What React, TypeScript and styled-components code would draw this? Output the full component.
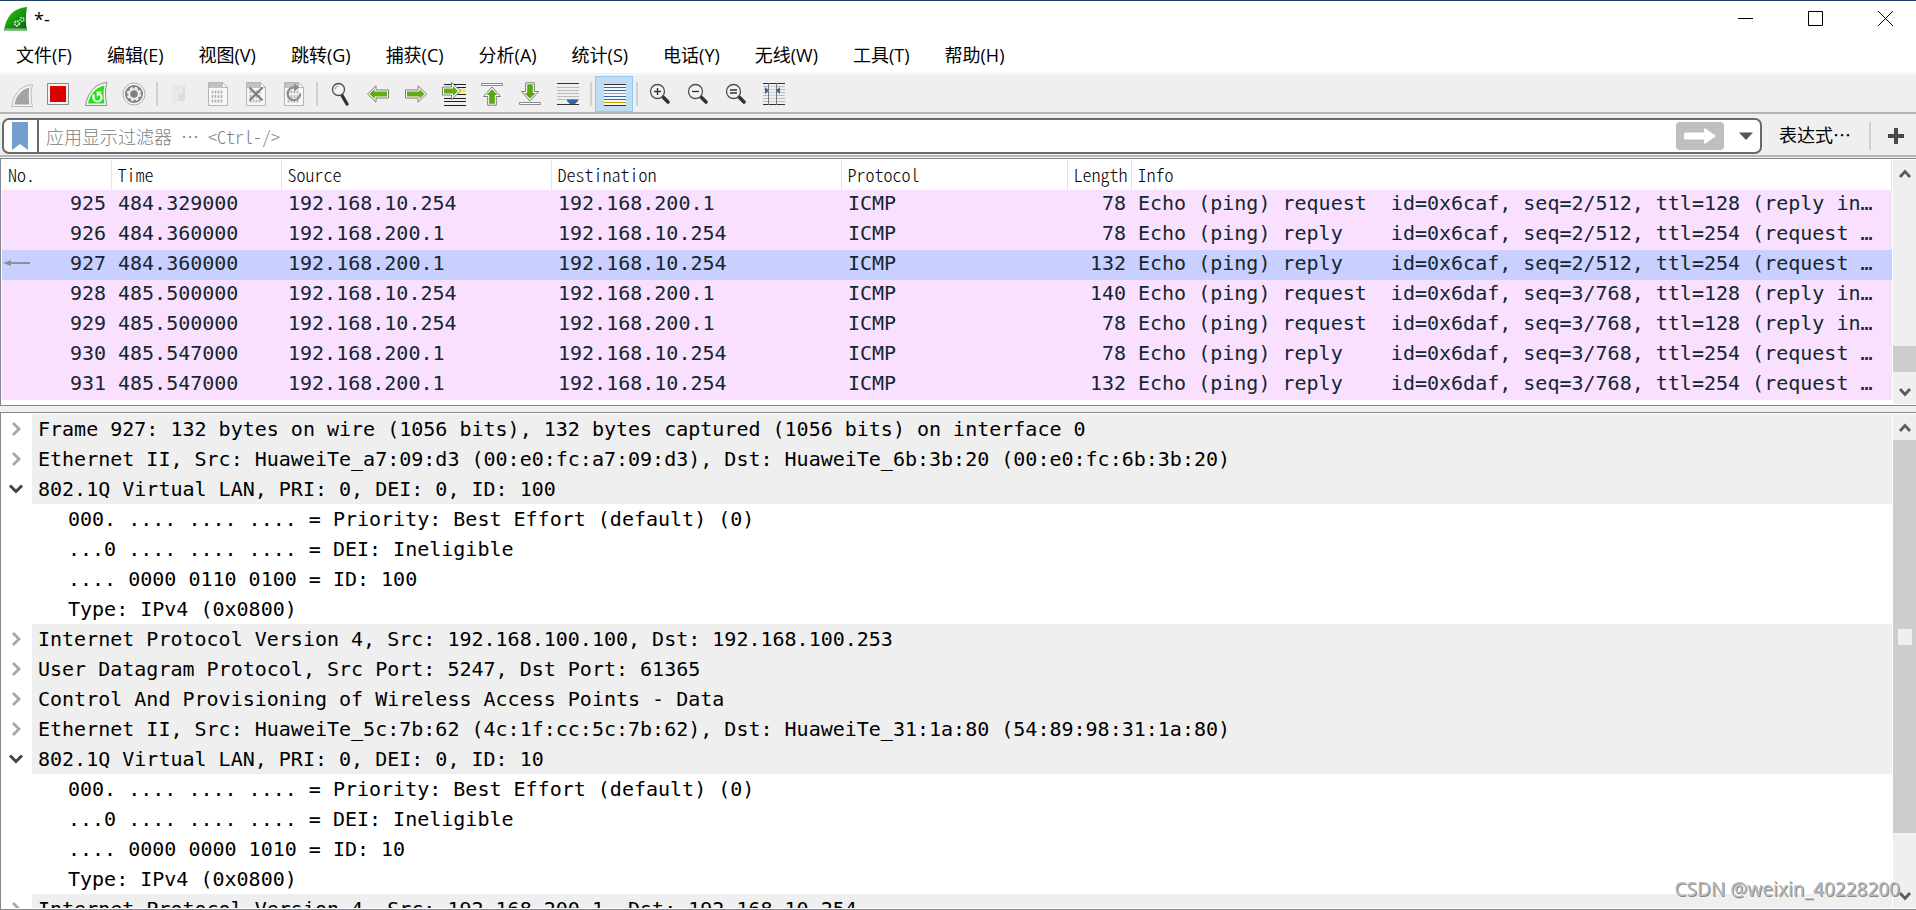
import React from 'react';
import styled, { createGlobalStyle, css } from 'styled-components';

const UI = '"Noto Sans CJK SC", "Open Sans", sans-serif';
const MENU = '"Open Sans", "Noto Sans CJK SC", sans-serif';
const MONO = '"DejaVu Sans Mono", "Liberation Mono", monospace';
const EDGE = '#828790';

const GlobalStyle = createGlobalStyle`
  * { box-sizing: border-box; }
  html, body { margin: 0; padding: 0; background: #fff; }
  button { border: 0; padding: 0; margin: 0; background: none; font: inherit; color: inherit; }
  svg { display: block; flex: none; }
`;

const Window = styled.main`
  position: relative;
  display: flex;
  flex-direction: column;
  height: 100vh;
  overflow: hidden;
  background: #f0f0f0;
  border-top: 1px solid #1b3f66;
  font: 18px ${UI};
  color: #000;
`;

const TitleBar = styled.header`
  display: flex;
  align-items: center;
  height: 35px;
  padding-left: 4px;
  background: #fff;
`;

const Title = styled.h1`
  flex: 1;
  margin: 0;
  padding-left: 7px;
  font: 400 18px/26px "Open Sans", sans-serif;
`;

const WindowControls = styled.div`
  display: flex;
  gap: 8px;
`;

const WindowButton = styled.button`
  display: flex;
  align-items: center;
  justify-content: center;
  width: 62px;
  height: 32px;
`;

const MenuBar = styled.nav`
  display: flex;
  height: 39px;
  background: #fff;
  border-bottom: 2px solid #f1f1f1;
  font-family: ${MENU};
`;

const MenuItem = styled.button`
  padding: 0 19px 0 16px;
  line-height: 36px;
  white-space: nowrap;
`;

const ToolBar = styled.div`
  display: flex;
  align-items: center;
  height: 39px;
  padding: 1px 0 0 1px;
  background: #efefef;
  border-bottom: 2px solid #b4b4b4;
  outline: 1px solid #fafafa;
`;

const ToolButton = styled.button<{ $active?: boolean }>`
  display: flex;
  align-items: center;
  justify-content: center;
  width: 38px;
  height: 36px;
  ${p => p.$active && css`
    background: #c0dcf3;
    border: 1px solid #90c8f6;
  `}
`;

const ToolSeparator = styled.span`
  width: 2px;
  height: 24px;
  margin: 0 3px;
  background: #cfcfcf;
`;

const FilterBar = styled.form`
  display: flex;
  align-items: center;
  height: 43px;
  padding: 2px 12px 0 2px;
  background: #efefef;
  border-bottom: 2px solid #b8b8b8;
`;

const FilterBox = styled.div`
  display: flex;
  align-items: center;
  flex: 1;
  height: 36px;
  background: #fff;
  border: 2px solid #696969;
  border-radius: 7px;
`;

const BookmarkButton = styled.button`
  display: flex;
  align-items: center;
  justify-content: center;
  width: 35px;
  height: 32px;
  padding-right: 1px;
  border-right: 2px solid #696969;
`;

const FilterInput = styled.input`
  flex: 1;
  min-width: 0;
  height: 28px;
  padding: 0 0 0 7px;
  border: 0;
  outline: 0;
  background: none;
  font: 18px/28px ${UI};
  font-feature-settings: "hwid";
  &::placeholder { color: #808080; opacity: 1; font-weight: 300; }
`;

const ApplyButton = styled.button`
  display: flex;
  align-items: center;
  justify-content: center;
  width: 48px;
  height: 28px;
  border-radius: 4px;
  background: #bfbfbf;
`;

const DropButton = styled.button`
  display: flex;
  align-items: center;
  justify-content: center;
  width: 36px;
  height: 32px;
  padding-left: 8px;
`;

const ExpressionButton = styled.button`
  padding: 0 18px 4px 17px;
  line-height: 28px;
`;

const BarSeparator = styled.span`
  width: 2px;
  height: 28px;
  background: #cfcfcf;
`;

const AddButton = styled.button`
  padding-left: 17px;
`;

const Pane = styled.section<{ $grow?: boolean }>`
  display: flex;
  flex: ${p => (p.$grow ? '1 1 0' : '0 0 auto')};
  min-height: 0;
  margin-top: ${p => (p.$grow ? 6 : 1)}px;
  padding: 1px 0 1px 1px;
  background: #fff;
  border: solid ${EDGE};
  border-width: 1px 0 1px 1px;
`;

const PaneBody = styled.div`
  flex: 1;
  min-width: 0;
  overflow: hidden;
`;

const PacketTable = styled.table`
  width: 100%;
  margin-bottom: 4px;
  table-layout: fixed;
  border-collapse: collapse;
`;

const Heading = styled.th`
  height: 30px;
  padding: 0 0 0 6px;
  overflow: hidden;
  border-right: 1px solid #e5e5e5;
  font: 18px/28px ${UI};
  font-feature-settings: "hwid";
  font-weight: 300;
  text-align: left;
  vertical-align: top;
  white-space: nowrap;
`;

const PacketRow = styled.tr<{ $selected?: boolean }>`
  height: 30px;
  background: ${p => (p.$selected ? '#c9cfff' : '#fae0ff')};
`;

const Cell = styled.td<{ $right?: boolean }>`
  height: 30px;
  padding: 0 5px 0 7px;
  overflow: hidden;
  color: #12272e;
  font: 20px/26px ${MONO};
  text-align: ${p => (p.$right ? 'right' : 'left')};
  vertical-align: top;
  white-space: pre;
`;

const NumberCell = styled.div`
  display: flex;
  align-items: center;
  justify-content: space-between;
  margin-left: -6px;
`;

const ScrollBar = styled.div`
  display: flex;
  flex-direction: column;
  flex: none;
  width: 24px;
  background: #efefef;
  border-left: 1px solid #fff;
`;

const ScrollButton = styled.button`
  display: flex;
  flex: none;
  align-items: center;
  justify-content: center;
  height: 26px;
  padding-top: 2px;
`;

const ScrollTrack = styled.div<{ $end?: boolean }>`
  display: flex;
  flex: 1;
  flex-direction: column;
  justify-content: ${p => (p.$end ? 'flex-end' : 'flex-start')};
  padding-bottom: ${p => (p.$end ? 6 : 0)}px;
`;

const ScrollThumb = styled.div<{ $size: string }>`
  display: flex;
  align-items: center;
  justify-content: center;
  height: ${p => p.$size};
  background: #cdcdcd;
`;

const Grip = styled.span`
  width: 14px;
  height: 16px;
  background: #efefef;
`;

const Tree = styled.ul`
  margin: 0;
  padding: 0;
  list-style: none;
`;

const TreeLine = styled.div`
  display: flex;
  height: 30px;
`;

const Toggle = styled.button`
  display: flex;
  flex: none;
  align-items: center;
  justify-content: center;
  width: 30px;
  padding-right: 3px;
`;

const TreeText = styled.span<{ $child?: boolean }>`
  flex: 1;
  padding-left: ${p => (p.$child ? 66 : 6)}px;
  background: ${p => (p.$child ? '#fff' : '#efefef')};
  font: 20px/30px ${MONO};
  white-space: pre;
`;

const Watermark = styled.span`
  position: absolute;
  right: 16px;
  bottom: 8px;
  color: #b8b8b8;
  font: 19px/26px "Noto Sans", sans-serif;
  text-shadow: 1px 1px 0 #8a8a8a, -1px -1px 0 #fff;
`;

/* ---------- drawings ---------- */

const Svg = ({ children }: { children: React.ReactNode }) => (
  <svg width="26" height="26" viewBox="0 0 26 26" fill="none" aria-hidden="true">{children}</svg>
);

const AppLogo = () => (
  <svg width="23" height="24" viewBox="0 0 23 24" aria-hidden="true">
    <defs>
      <linearGradient id="fin" x1="0" y1="0" x2="1" y2="1">
        <stop offset="0" stopColor="#3fc41a" />
        <stop offset="0.5" stopColor="#159a10" />
        <stop offset="1" stopColor="#0b5c0b" />
      </linearGradient>
    </defs>
    <path d="M0 23.500C2 10 9 1 23 0c-1.500 8-1.500 16 0 23.500z" fill="url(#fin)" />
    <path d="M1 21.500h21.500v2H.5z" fill="#7fb98a" />
    <circle cx="13" cy="16.500" r="2.300" fill="none" stroke="#cfe8cf" strokeWidth="1.800" strokeDasharray="1.600 .8" />
    <circle cx="18" cy="12.500" r="1.900" fill="none" stroke="#cfe8cf" strokeWidth="1.500" strokeDasharray="1.400 .8" />
  </svg>
);

const FinGrey = () => (
  <Svg>
    <path d="M4.500 25.500C6.500 14 13 4.500 25.500 3.500c-2 7-2 15 0 22z" fill="#f6f6f6" stroke="#b9b9b9" />
    <path d="M7.500 23.500C9.500 14.500 14 8.500 22.500 6.500c-1 5.500-1 11.500 0 17z" fill="#a3a3a3" />
  </Svg>
);

const Stop = () => (
  <Svg>
    <path d="M2.500 2.500h21v21h-21z" fill="#f4f4f4" stroke="#8b8b8b" />
    <path d="M5 5h16v16H5z" fill="#dc0000" />
  </Svg>
);

const Restart = () => (
  <Svg>
    <path d="M2.500 24.500C4.500 13 11 2.500 24 1.500c-2 7-2 16 0 23z" fill="#f6f6f6" stroke="#8f8f8f" />
    <path d="M5 22.500C7 13.500 12 6.500 21.500 4.500c-1.300 6-1.300 12.500 0 18z" fill="#1fe60e" />
    <path d="M10.500 13.500v3a4 4 0 0 0 8 0c0-1.500-.8-2.800-2-3.400" stroke="#fff" strokeWidth="2.200" />
    <path d="M13.500 10.500h5.500l-5 5.500z" fill="#fff" />
  </Svg>
);

const Gear = () => (
  <Svg>
    <circle cx="13" cy="13" r="11" fill="#f4f4f4" stroke="#b0b0b0" />
    <circle cx="13" cy="13" r="9" fill="#808080" />
    <circle cx="13" cy="13" r="6.200" stroke="#f0f0f0" strokeWidth="2" strokeDasharray="2.900 1.970" />
    <circle cx="13" cy="13" r="4.800" stroke="#f0f0f0" strokeWidth="2" />
  </Svg>
);

const OpenFile = () => (
  <Svg>
    <path d="M4 3h5v20l-4-1z" fill="#e9e9e9" />
    <path d="M7 5h11v15H7z" fill="#dcdcdc" />
    <path d="M7 4.500l5-1.500v17l-4 2.500z" fill="#e8e8e8" />
    <path d="M12 4h4v9h-4z" fill="#e8e8e8" />
  </Svg>
);

const Sheet = ({ children }: { children?: React.ReactNode }) => (
  <Svg>
    <path d="M3.500 1.500h14l5 5v18h-19z" fill="#f8f8f8" stroke="#b5b5b5" />
    <path d="M4 2h13v5H4z" fill="#c2c2c2" />
    <path d="M17.500 1.500v5h5z" fill="#fff" stroke="#b5b5b5" />
    <path d="M7.500 9.500v3m3-3v3m3-3v3m3-3v3m-9 1.500v3m3-3v3m3-3v3m3-3v3m-9 1.500v3m3-3v3m3-3v3m3-3v3" stroke="#b4b4b4" strokeWidth="1.700" />
    {children}
  </Svg>
);

const CloseFile = () => (
  <Sheet><path d="M6.500 6.500l13 13m0-13l-13 13" stroke="#7d7d7d" strokeWidth="2.200" /></Sheet>
);

const ReloadFile = () => (
  <Sheet>
    <path d="M19.200 12.500a6.300 6.300 0 1 1-6.200-6" stroke="#8c8c8c" strokeWidth="2.300" />
    <path d="M13 2.500l5.500 4-5.500 4z" fill="#8c8c8c" />
  </Sheet>
);

const Find = () => (
  <Svg>
    <path d="M14.500 13.500l5.500 9.500" stroke="#2e3436" strokeWidth="3.400" strokeLinecap="round" />
    <circle cx="11.500" cy="8.500" r="6" fill="#f3f5f5" stroke="#4a4f50" strokeWidth="1.300" />
    <path d="M8 8.500a3.500 3.500 0 0 1 3.500-3.500" stroke="#9a9a9a" />
  </Svg>
);

const LEFT = 'M2.500 13L11 4.800V9h12.500v8H11v4.200z';

const Arrow = ({ transform }: { transform?: string }) => (
  <g transform={transform}>
    <path d={LEFT} fill="#fff" stroke="#7c7c7c" strokeLinejoin="round" />
    <path d="M4.500 13L9.600 8v2.500H22v5H9.600V18z" fill="#62ad12" />
  </g>
);

const GoLeft = () => <Svg><Arrow /></Svg>;
const GoRight = () => <Svg><Arrow transform="matrix(-1 0 0 1 26 0)" /></Svg>;

const GoTo = () => (
  <Svg>
    <path d="M3 3.500h22M3 6.500h22M3 13.500h22M3 17.500h22M3 20.500h22M3 24.500h22" stroke="#1e1e1e" />
    <path d="M18 8h7v3.500h-7z" fill="#fce94f" />
    <path d="M1.500 6h9V1.500l9 8.500-9 8.500V14h-9z" fill="#fff" stroke="#7c7c7c" strokeLinejoin="round" />
    <path d="M3 7.500h9V5l5 5-5 5v-2.500H3z" fill="#62ad12" />
  </Svg>
);

const VerticalArrow = () => (
  <>
    <path d="M2.500 2.500h21v2h-21z" fill="#fff" stroke="#8a8a8a" />
    <path d="M13 6l8.500 9.500h-4.200v8.700H8.700v-8.700H4.500z" fill="#fff" stroke="#7c7c7c" strokeLinejoin="round" />
    <path d="M13 8.300l5.500 5.700h-2.700v8.700h-5.600V14H7.500z" fill="#58a810" />
  </>
);

const GoTop = () => <Svg><VerticalArrow /></Svg>;
const GoBottom = () => <Svg><g transform="matrix(1 0 0 -1 0 26)"><VerticalArrow /></g></Svg>;

const AutoScroll = () => (
  <Svg>
    <path d="M2 6.500h22M2 9.500h22M2 12.500h22M2 15.500h22M2 18.500h22" stroke="#babdb6" />
    <path d="M2 2.500h22M2 23.500h22" stroke="#2e3436" />
    <path d="M12 18.500h11v1.500l-3 3h-5l-3-3z" fill="#3465a4" />
  </Svg>
);

const Colorize = () => (
  <Svg>
    <path d="M3 3h22v22H3z" fill="#f6f6f6" />
    {['#2e3436', '#ef2929', '#3465a4', '#73d216', '#3465a4', '#75507b', '#c4a000', '#2e3436'].map((color, i) => (
      <path key={i} d={`M3 ${3 + i * 3}.5h22`} stroke={color} />
    ))}
  </Svg>
);

const Magnifier = ({ sign }: { sign: string }) => (
  <Svg>
    <path d="M15.500 15.500L21 21" stroke="#2e3436" strokeWidth="3.600" strokeLinecap="round" />
    <circle cx="10.500" cy="10.500" r="7" fill="#f2f4f4" stroke="#4a4f50" strokeWidth="1.300" />
    <path d={sign} stroke="#2e3436" strokeWidth="1.400" />
  </Svg>
);

const ResizeColumns = () => (
  <Svg>
    <path d="M2 5.500h22M2 8.500h22M2 11.500h22M2 14.500h22M2 17.500h22M2 20.500h22" stroke="#babdb6" />
    <path d="M8 3h8v20H8z" fill="#efefef" fillOpacity=".4" />
    <path d="M2 2.500h22M2 23.500h22" stroke="#2e3436" />
    <path d="M7.500 2v22M15.500 2v22" stroke="#777" />
    <path d="M4 6l4 3.500L4 13zM19 6v7l-4-3.500z" fill="#3465a4" />
  </Svg>
);

const Chevron = ({ dir }: { dir: 'up' | 'down' }) => (
  <svg width="12" height="10" viewBox="0 0 12 10" fill="none" aria-hidden="true">
    <path d={dir === 'up' ? 'M1 8l5-5.500L11 8' : 'M1 2l5 5.500L11 2'} stroke="#5a5a5a" strokeWidth="2.800" />
  </svg>
);

const TreeChevron = ({ open }: { open: boolean }) => (
  <svg width="14" height="14" viewBox="0 0 14 14" fill="none" aria-hidden="true">
    {open
      ? <path d="M1 3.500L7 9.500l6-6" stroke="#404040" strokeWidth="2.800" />
      : <path d="M4 1L10 7l-6 6" stroke="#a6a6a6" strokeWidth="2.800" />}
  </svg>
);

/* ---------- data ---------- */

const menus = ['文件(F)', '编辑(E)', '视图(V)', '跳转(G)', '捕获(C)', '分析(A)', '统计(S)', '电话(Y)', '无线(W)', '工具(T)', '帮助(H)'];

type Tool = { name: string; icon: React.ReactNode; active?: boolean };

const toolGroups: Tool[][] = [
  [
    { name: '开始捕获', icon: <FinGrey /> },
    { name: '停止捕获', icon: <Stop /> },
    { name: '重新开始捕获', icon: <Restart /> },
    { name: '捕获选项', icon: <Gear /> },
  ],
  [
    { name: '打开', icon: <OpenFile /> },
    { name: '保存', icon: <Sheet /> },
    { name: '关闭', icon: <CloseFile /> },
    { name: '重新加载', icon: <ReloadFile /> },
  ],
  [
    { name: '查找分组', icon: <Find /> },
    { name: '上一个分组', icon: <GoLeft /> },
    { name: '下一个分组', icon: <GoRight /> },
    { name: '转到分组', icon: <GoTo /> },
    { name: '首个分组', icon: <GoTop /> },
    { name: '最新分组', icon: <GoBottom /> },
    { name: '自动滚动', icon: <AutoScroll /> },
  ],
  [{ name: '着色', icon: <Colorize />, active: true }],
  [
    { name: '放大', icon: <Magnifier sign="M7 10.500h7M10.500 7v7" /> },
    { name: '缩小', icon: <Magnifier sign="M7 10.500h7" /> },
    { name: '原始大小', icon: <Magnifier sign="M7 9h7M7 12h7" /> },
    { name: '调整列宽', icon: <ResizeColumns /> },
  ],
];

const columns: { name: string; width?: number }[] = [
  { name: 'No.', width: 109 },
  { name: 'Time', width: 170 },
  { name: 'Source', width: 270 },
  { name: 'Destination', width: 290 },
  { name: 'Protocol', width: 226 },
  { name: 'Length', width: 64 },
  { name: 'Info' },
];

const A = '192.168.10.254';
const B = '192.168.200.1';

type Packet = { no: number; time: string; src: string; dst: string; len: number; info: string };

const packets: Packet[] = [
  { no: 925, time: '484.329000', src: A, dst: B, len: 78, info: 'Echo (ping) request  id=0x6caf, seq=2/512, ttl=128 (reply in…' },
  { no: 926, time: '484.360000', src: B, dst: A, len: 78, info: 'Echo (ping) reply    id=0x6caf, seq=2/512, ttl=254 (request …' },
  { no: 927, time: '484.360000', src: B, dst: A, len: 132, info: 'Echo (ping) reply    id=0x6caf, seq=2/512, ttl=254 (request …' },
  { no: 928, time: '485.500000', src: A, dst: B, len: 140, info: 'Echo (ping) request  id=0x6daf, seq=3/768, ttl=128 (reply in…' },
  { no: 929, time: '485.500000', src: A, dst: B, len: 78, info: 'Echo (ping) request  id=0x6daf, seq=3/768, ttl=128 (reply in…' },
  { no: 930, time: '485.547000', src: B, dst: A, len: 78, info: 'Echo (ping) reply    id=0x6daf, seq=3/768, ttl=254 (request …' },
  { no: 931, time: '485.547000', src: B, dst: A, len: 132, info: 'Echo (ping) reply    id=0x6daf, seq=3/768, ttl=254 (request …' },
];

const details: { text: string; fields?: string[] }[] = [
  { text: 'Frame 927: 132 bytes on wire (1056 bits), 132 bytes captured (1056 bits) on interface 0' },
  { text: 'Ethernet II, Src: HuaweiTe_a7:09:d3 (00:e0:fc:a7:09:d3), Dst: HuaweiTe_6b:3b:20 (00:e0:fc:6b:3b:20)' },
  {
    text: '802.1Q Virtual LAN, PRI: 0, DEI: 0, ID: 100',
    fields: [
      '000. .... .... .... = Priority: Best Effort (default) (0)',
      '...0 .... .... .... = DEI: Ineligible',
      '.... 0000 0110 0100 = ID: 100',
      'Type: IPv4 (0x0800)',
    ],
  },
  { text: 'Internet Protocol Version 4, Src: 192.168.100.100, Dst: 192.168.100.253' },
  { text: 'User Datagram Protocol, Src Port: 5247, Dst Port: 61365' },
  { text: 'Control And Provisioning of Wireless Access Points - Data' },
  { text: 'Ethernet II, Src: HuaweiTe_5c:7b:62 (4c:1f:cc:5c:7b:62), Dst: HuaweiTe_31:1a:80 (54:89:98:31:1a:80)' },
  {
    text: '802.1Q Virtual LAN, PRI: 0, DEI: 0, ID: 10',
    fields: [
      '000. .... .... .... = Priority: Best Effort (default) (0)',
      '...0 .... .... .... = DEI: Ineligible',
      '.... 0000 0000 1010 = ID: 10',
      'Type: IPv4 (0x0800)',
    ],
  },
  { text: 'Internet Protocol Version 4, Src: 192.168.200.1, Dst: 192.168.10.254' },
];

const selectedPacket = 927;

export default function App() {
  return (
    <>
      <GlobalStyle />
      <Window>
        <TitleBar>
          <AppLogo />
          <Title>*-</Title>
          <WindowControls>
            <WindowButton aria-label="最小化">
              <svg width="15" height="15" viewBox="0 0 15 15"><path d="M0 7.500h15" stroke="#000" /></svg>
            </WindowButton>
            <WindowButton aria-label="最大化">
              <svg width="15" height="15" viewBox="0 0 15 15"><path d="M.5.5h14v14H.5z" fill="none" stroke="#000" /></svg>
            </WindowButton>
            <WindowButton aria-label="关闭窗口">
              <svg width="15" height="15" viewBox="0 0 15 15"><path d="M0 0l15 15M15 0L0 15" stroke="#000" /></svg>
            </WindowButton>
          </WindowControls>
        </TitleBar>

        <MenuBar>
          {menus.map(m => <MenuItem key={m}>{m}</MenuItem>)}
        </MenuBar>

        <ToolBar role="toolbar">
          {toolGroups.map((group, i) => (
            <React.Fragment key={i}>
              {i > 0 && <ToolSeparator />}
              {group.map(t => (
                <ToolButton key={t.name} aria-label={t.name} $active={t.active}>{t.icon}</ToolButton>
              ))}
            </React.Fragment>
          ))}
        </ToolBar>

        <FilterBar onSubmit={e => e.preventDefault()}>
          <FilterBox>
            <BookmarkButton type="button" aria-label="书签">
              <svg width="16" height="28" viewBox="0 0 16 28"><path d="M0 0h16v28l-8-6-8 6z" fill="#729fcf" /></svg>
            </BookmarkButton>
            <FilterInput type="text" aria-label="显示过滤器" placeholder="应用显示过滤器 … <Ctrl-/>" />
            <ApplyButton type="submit" aria-label="应用">
              <svg width="32" height="16" viewBox="0 0 32 16">
                <path d="M1.500 4.500H20V1.500Q20 0 21.500.5L32 8 21.500 15.500Q20 16 20 14.500v-3H1.500Q0 11.500 0 10V6q0-1.500 1.500-1.500z" fill="#fff" />
              </svg>
            </ApplyButton>
            <DropButton type="button" aria-label="最近的过滤器">
              <svg width="14" height="8" viewBox="0 0 14 8"><path d="M0 .5h14L7 8z" fill="#555753" /></svg>
            </DropButton>
          </FilterBox>
          <ExpressionButton type="button">表达式…</ExpressionButton>
          <BarSeparator />
          <AddButton type="button" aria-label="添加过滤器按钮">
            <svg width="16" height="16" viewBox="0 0 16 16"><path d="M8 0v16M0 8h16" stroke="#4a4a4a" strokeWidth="4" /></svg>
          </AddButton>
        </FilterBar>

        <Pane>
          <PaneBody>
            <PacketTable>
              <colgroup>
                {columns.map(c => <col key={c.name} width={c.width} />)}
              </colgroup>
              <thead>
                <tr>{columns.map(c => <Heading key={c.name} scope="col">{c.name}</Heading>)}</tr>
              </thead>
              <tbody>
                {packets.map(p => (
                  <PacketRow key={p.no} $selected={p.no === selectedPacket}>
                    <Cell $right>
                      {p.no === selectedPacket ? (
                        <NumberCell>
                          <svg width="27" height="8" viewBox="0 0 27 8" aria-hidden="true">
                            <path d="M7 4h20" stroke="#8a939b" strokeWidth="2" />
                            <path d="M0 4l8-3v6z" fill="#8a939b" />
                          </svg>
                          {p.no}
                        </NumberCell>
                      ) : p.no}
                    </Cell>
                    <Cell>{p.time}</Cell>
                    <Cell>{p.src}</Cell>
                    <Cell>{p.dst}</Cell>
                    <Cell>ICMP</Cell>
                    <Cell $right>{p.len}</Cell>
                    <Cell>{p.info}</Cell>
                  </PacketRow>
                ))}
              </tbody>
            </PacketTable>
          </PaneBody>
          <ScrollBar>
            <ScrollButton aria-label="向上滚动"><Chevron dir="up" /></ScrollButton>
            <ScrollTrack $end><ScrollThumb $size="26px" /></ScrollTrack>
            <ScrollButton aria-label="向下滚动"><Chevron dir="down" /></ScrollButton>
          </ScrollBar>
        </Pane>

        <Pane $grow>
          <PaneBody>
            <Tree>
              {details.map(d => (
                <li key={d.text}>
                  <TreeLine>
                    <Toggle aria-label={d.text} aria-expanded={!!d.fields}><TreeChevron open={!!d.fields} /></Toggle>
                    <TreeText>{d.text}</TreeText>
                  </TreeLine>
                  {d.fields && (
                    <Tree>
                      {d.fields.map(f => (
                        <li key={f}><TreeLine><TreeText $child>{f}</TreeText></TreeLine></li>
                      ))}
                    </Tree>
                  )}
                </li>
              ))}
            </Tree>
          </PaneBody>
          <ScrollBar>
            <ScrollButton aria-label="向上滚动"><Chevron dir="up" /></ScrollButton>
            <ScrollTrack><ScrollThumb $size="89%"><Grip /></ScrollThumb></ScrollTrack>
            <ScrollButton aria-label="向下滚动"><Chevron dir="down" /></ScrollButton>
          </ScrollBar>
        </Pane>

        <Watermark>CSDN @weixin_40228200</Watermark>
      </Window>
    </>
  );
}
